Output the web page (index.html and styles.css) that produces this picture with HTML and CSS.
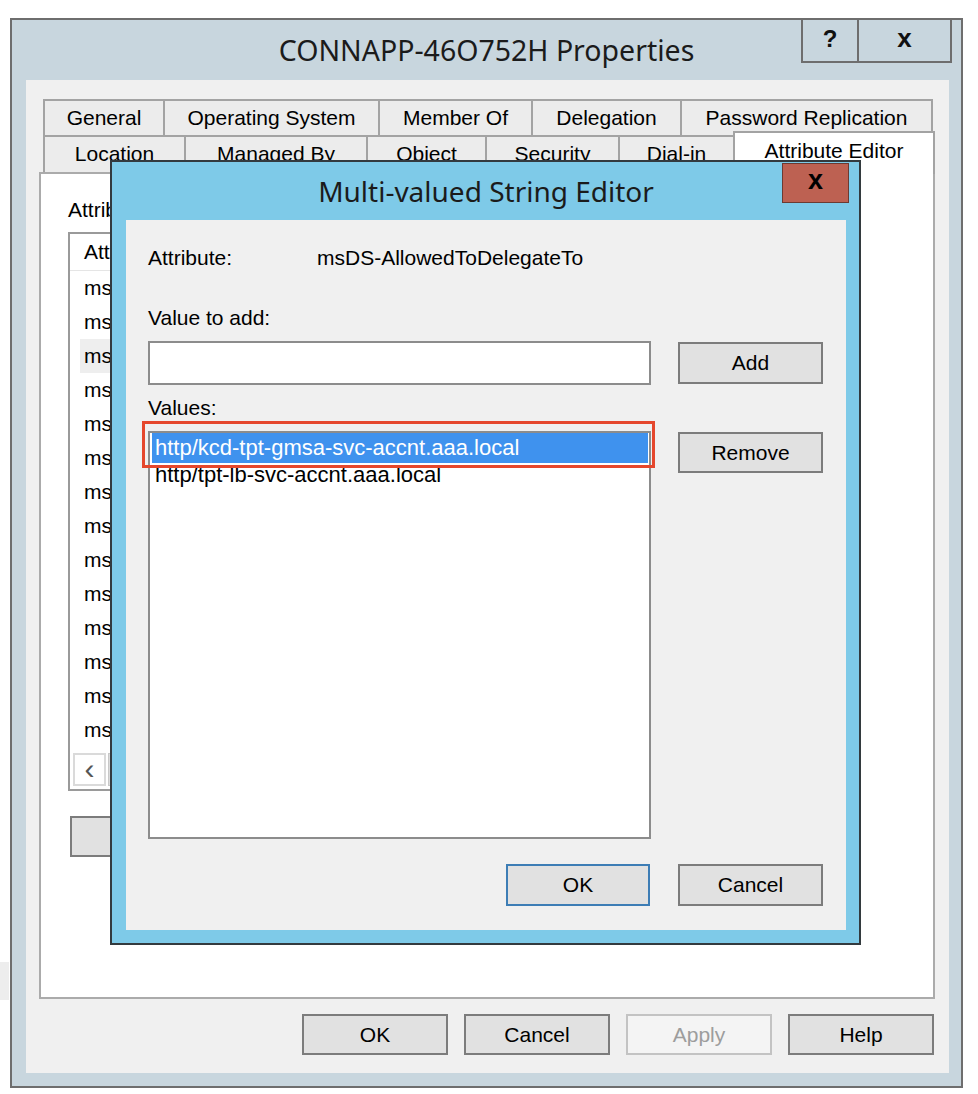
FILE: index.html
```html
<!DOCTYPE html>
<html>
<head>
<meta charset="utf-8">
<link rel="stylesheet" href="styles.css">
</head>
<body>
<div class="edge-strip"></div>
<div class="window">
  <div class="titlebar">
    <div></div>
    <div class="title">CONNAPP-46O752H Properties</div>
    <div class="capbtns">
      <div class="capbtn help">?</div>
      <div class="capbtn close">x</div>
    </div>
  </div>
  <div class="client">
    <div class="tabs">
      <div class="tabrow">
        <div class="tab w120">General</div>
        <div class="tab w215">Operating System</div>
        <div class="tab w153">Member Of</div>
        <div class="tab w149">Delegation</div>
        <div class="tab w253 last">Password Replication</div>
      </div>
      <div class="tabrow row2">
        <div class="tab w141">Location</div>
        <div class="tab w182">Managed By</div>
        <div class="tab w119">Object</div>
        <div class="tab w133">Security</div>
        <div class="tab w115">Dial-in</div>
        <div class="tab active">Attribute Editor</div>
      </div>
    </div>
    <div class="panel">
      <div class="under">
        <div class="plabel">Attributes:</div>
        <div class="alist">
          <div class="ahead"><span>Attr</span></div>
          <div class="arows">
            <div class="arow">msDS</div>
            <div class="arow">msDS</div>
            <div class="arow sel">msDS</div>
            <div class="arow">msDS</div>
            <div class="arow">msDS</div>
            <div class="arow">msDS</div>
            <div class="arow">msDS</div>
            <div class="arow">msDS</div>
            <div class="arow">msDS</div>
            <div class="arow">msDS</div>
            <div class="arow">msDS</div>
            <div class="arow">msDS</div>
            <div class="arow">msDS</div>
            <div class="arow">msDS</div>
          </div>
          <div class="hscroll">
            <div class="sbtn">&lsaquo;</div>
            <div class="sthumb"></div>
          </div>
        </div>
        <div class="btn editbtn"></div>
      </div>
    </div>
    <div class="btnrow">
      <div class="btn">OK</div>
      <div class="btn">Cancel</div>
      <div class="btn disabled">Apply</div>
      <div class="btn">Help</div>
    </div>
  </div>
</div>

<div class="modal">
  <div class="mtitlebar">
    <div class="mtitle">Multi-valued String Editor</div>
    <div class="mclose">x</div>
  </div>
  <div class="mclient">
    <div class="attrrow">
      <span class="attrlabel">Attribute:</span>
      <span>msDS-AllowedToDelegateTo</span>
    </div>
    <div class="lbl addlbl">Value to add:</div>
    <div class="grid addrow">
      <div class="textbox"></div>
      <div class="btn addbtn">Add</div>
    </div>
    <div class="lbl">Values:</div>
    <div class="grid valrow">
      <div class="vlist">
        <div class="vitem selected">http/kcd-tpt-gmsa-svc-accnt.aaa.local</div>
        <div class="vitem">http/tpt-lb-svc-accnt.aaa.local</div>
        <div class="redbox"></div>
      </div>
      <div class="btn rembtn">Remove</div>
    </div>
    <div class="grid okrow">
      <div class="btn okbtn focus">OK</div>
      <div class="btn">Cancel</div>
    </div>
  </div>
</div>
</body>
</html>
```
FILE: styles.css
```css
* { box-sizing: border-box; }
html, body { margin: 0; padding: 0; background: #ffffff; }
body {
  position: relative;
  width: 978px;
  height: 1094px;
  overflow: hidden;
  font-family: "Liberation Sans", Arial, sans-serif;
  font-size: 21px;
  color: #000;
}
.edge-strip {
  position: absolute;
  left: 0; top: 962px;
  width: 9px; height: 38px;
  background: #ededed;
}
.window {
  margin: 18px 0 0 10px;
  width: 953px;
  height: 1070px;
  border: 2px solid #6e6e6e;
  background: #c8d6de;
  padding: 0 12px 13px 14px;
  display: flex;
  flex-direction: column;
}
.titlebar {
  height: 60px;
  display: grid;
  grid-template-columns: 1fr auto 1fr;
}
.title {
  font-family: "Noto Sans", "Open Sans", sans-serif;
  font-size: 28.5px;
  color: #1b1b1b;
  line-height: 60px;
  white-space: nowrap;
  margin-left: -2px;
}
.capbtns {
  display: flex;
  justify-content: flex-end;
  align-items: flex-start;
  margin-right: -3px;
}
.capbtn {
  height: 43px;
  border: 2px solid #6e6e6e;
  border-top: none;
  font-weight: bold;
  text-align: center;
  line-height: 37px;
  font-size: 24px;
  color: #111;
}
.capbtn.help { width: 58px; }
.capbtn.close { width: 93px; border-left: none; font-size: 26px; }

.client {
  background: #f0f0f0;
  height: 993px;
  padding: 19px 14px 0 13px;
  display: flex;
  flex-direction: column;
}
.tabs { padding-left: 4px; }
.tabrow { display: flex; height: 36px; }
.tabrow.row2 { height: 37px; align-items: flex-end; }
.tab {
  height: 100%;
  background: #ececec;
  border-left: 2px solid #a3a3a3;
  border-top: 2px solid #a3a3a3;
  text-align: center;
  line-height: 34px;
  white-space: nowrap;
}
.tab.last { border-right: 2px solid #a3a3a3; }
.row2 .tab { line-height: 33px; }
.tab.active {
  width: 202px;
  height: 43px;
  margin-bottom: -2px;
  background: #ffffff;
  border-right: 2px solid #a3a3a3;
  position: relative;
  z-index: 1;
  line-height: 36px;
}
.w120 { width: 120px; } .w215 { width: 215px; } .w153 { width: 153px; }
.w149 { width: 149px; } .w253 { width: 253px; } .w141 { width: 141px; }
.w182 { width: 182px; } .w119 { width: 119px; } .w133 { width: 133px; }
.w115 { width: 115px; }

.panel {
  width: 896px;
  height: 827px;
  background: #ffffff;
  border: 2px solid #ababab;
  padding: 24px 0 0 27px;
}
.under { width: 120px; }
.plabel { line-height: 24px; white-space: nowrap; }
.alist {
  margin-top: 10px;
  width: 120px;
  height: 559px;
  border: 2px solid #9a9a9a;
  display: flex;
  flex-direction: column;
}
.ahead {
  height: 37px;
  border-bottom: 1px solid #e5e5e5;
  padding-left: 14px;
  line-height: 35px;
}
.arows { flex: 1; }
.arow {
  height: 34px;
  line-height: 34px;
  margin-left: 10px;
  padding-left: 4px;
  white-space: nowrap;
}
.arow.sel { background: #eeeeee; }
.hscroll {
  height: 33px;
  margin: 0 2px 3px 3px;
  display: flex;
}
.sbtn {
  width: 33px;
  height: 33px;
  border: 2px solid #dadada;
  background: #fff;
  text-align: center;
  font-size: 30px;
  line-height: 28px;
  color: #555;
}
.sthumb { width: 60px; background: #dcdcdc; border: 1px solid #c8c8c8; margin-left: 2px; }

.btn {
  height: 41px;
  width: 146px;
  background: #e1e1e1;
  border: 2px solid #7c7c7c;
  text-align: center;
  line-height: 37px;
  white-space: nowrap;
}
.btn.disabled { background: #f4f4f4; border-color: #c3c3c3; color: #9d9d9d; }
.btn.focus { border-color: #3d7db5; }
.editbtn { margin: 25px 0 0 2px; width: 110px; }
.btnrow {
  margin-top: 15px;
  display: flex;
  justify-content: flex-end;
  gap: 16px;
  padding-right: 1px;
}

.modal {
  position: absolute;
  left: 110px;
  top: 160px;
  width: 751px;
  height: 785px;
  border: 2px solid #333a3e;
  background: #7ecae8;
  padding: 0 13px 13px 14px;
  display: flex;
  flex-direction: column;
  z-index: 5;
}
.mtitlebar { height: 58px; position: relative; text-align: center; }
.mtitle {
  font-family: "Noto Sans", "Open Sans", sans-serif;
  font-size: 28px;
  line-height: 58px;
  color: #1b1b1b;
}
.mclose {
  position: absolute;
  right: -3px;
  top: 1px;
  width: 67px;
  height: 40px;
  background: #bd6152;
  border: 1px solid #6c3a32;
  font-weight: bold;
  font-size: 27px;
  line-height: 32px;
  text-align: center;
  color: #000;
}
.mclient {
  flex: 1;
  background: #f0f0f0;
  padding-left: 22px;
}
.attrrow { display: flex; margin-top: 26px; line-height: 24px; }
.attrlabel { width: 169px; }
.lbl { line-height: 24px; margin-top: 11px; }
.lbl.addlbl { margin-top: 36px; }
.grid {
  display: grid;
  grid-template-columns: 503px 145px;
  column-gap: 27px;
  align-items: start;
}
.addrow { margin-top: 11px; }
.textbox { height: 44px; background: #fff; border: 2px solid #8c8c8c; }
.addbtn { width: 145px; height: 42px; margin-top: 1px; line-height: 38px; }
.valrow { margin-top: 11px; }
.vlist {
  position: relative;
  height: 408px;
  background: #fff;
  border: 2px solid #8c8c8c;
  padding: 0 1px 0 2px;
}
.vitem {
  height: 24px;
  line-height: 24px;
  padding-left: 3px;
  white-space: nowrap;
  font-size: 22px;
}
.vitem.selected { height: 30px; line-height: 30px; background: #3f92ee; color: #fff; }
.redbox {
  position: absolute;
  left: -8px;
  top: -12px;
  width: 513px;
  height: 47px;
  border: 3px solid #e5472d;
}
.rembtn { width: 145px; margin-top: 1px; }
.okrow { margin-top: 25px; }
.okbtn { justify-self: end; width: 144px; height: 42px; margin-right: 1px; line-height: 38px; }
.okrow .btn:last-child { width: 145px; height: 42px; line-height: 38px; }
```
